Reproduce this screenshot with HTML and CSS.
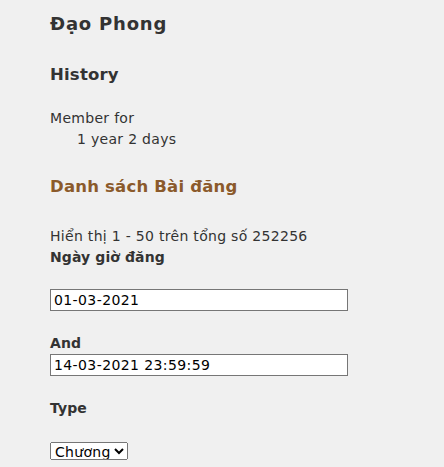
FILE: index.html
```html
<!DOCTYPE html>
<html lang="vi">
<head>
<meta charset="utf-8">
<title>Đạo Phong</title>
<link rel="stylesheet" href="styles.css">
</head>
<body>
<div class="page">
  <h1 class="name">Đạo Phong</h1>
  <h2 class="section">History</h2>
  <dl class="history">
    <dt>Member for</dt>
    <dd>1 year 2 days</dd>
  </dl>
  <h2 class="section posts">Danh sách Bài đăng</h2>
  <p class="summary">Hiển thị 1 - 50 trên tổng số 252256</p>
  <form class="filters">
    <label class="lbl">Ngày giờ đăng</label>
    <input class="field first" type="text" value="01-03-2021">
    <label class="lbl and">And</label>
    <input class="field" type="text" value="14-03-2021 23:59:59">
    <label class="lbl type">Type</label>
    <select class="sel"><option>Chương</option></select>
  </form>
</div>
</body>
</html>
```
FILE: styles.css
```css
html, body {
  margin: 0;
  padding: 0;
  background: #f0f0f0;
}
body {
  font-family: "DejaVu Sans", Verdana, sans-serif;
  font-size: 14px;
  letter-spacing: 0.3px;
  color: #333;
}
.page {
  padding: 13px 0 0 50px;
}
.name {
  font-size: 18px;
  letter-spacing: 0.8px;
  font-weight: bold;
  margin: 0;
  line-height: 22px;
}
.section {
  font-size: 16.5px;
  letter-spacing: 0.2px;
  font-weight: bold;
  margin: 30px 0 0;
  line-height: 20px;
}
.posts {
  color: #8b5a2b;
  margin-top: 27px;
}
.history {
  margin: 23px 0 0;
  line-height: 21px;
}
.history dt { margin: 0; }
.history dd { margin: 0 0 0 27px; }
.summary {
  margin: 29px 0 0;
  line-height: 21px;
}
.filters {
  display: flex;
  flex-direction: column;
  align-items: flex-start;
}
.lbl {
  font-weight: bold;
  letter-spacing: 0.1px;
  line-height: 21px;
}
.field {
  width: 298px;
  height: 22px;
  box-sizing: border-box;
  border: 1px solid #767676;
  background: #fff;
  font-family: inherit;
  font-size: 14px;
  letter-spacing: 0.4px;
  color: #000;
  padding: 1px 3px;
  margin: 0;
}
.first { margin-top: 21px; }
.and { margin-top: 22px; }
.type { margin-top: 22px; }
.sel {
  margin-top: 23px;
  font-family: inherit;
  font-size: 14px;
  letter-spacing: 0.3px;
  height: 18px;
  color: #000;
}
```
